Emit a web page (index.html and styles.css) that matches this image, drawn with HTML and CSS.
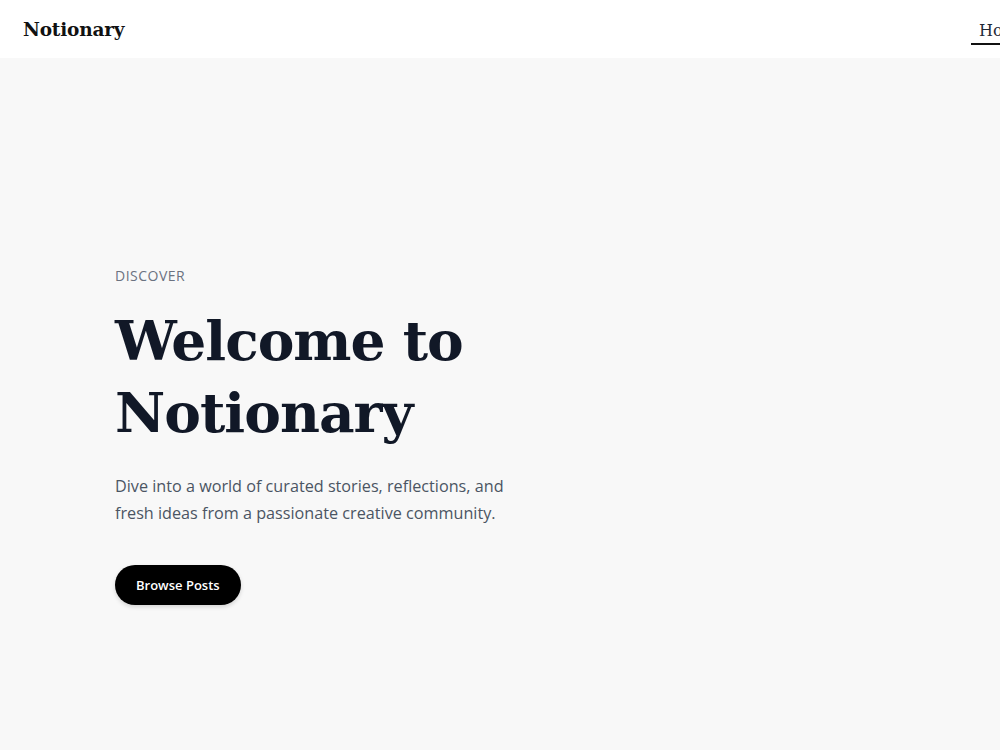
FILE: index.html
```html
<!DOCTYPE html>
<html lang="en">
<head>
  <meta charset="UTF-8" />
  <meta name="viewport" content="width=device-width, initial-scale=1.0"/>
  <title>Notionary</title>
  <link rel="stylesheet" href="styles.css">
</head>
<body>
  <header class="topbar">
    <div class="logo">Notionary</div>
    <nav class="nav">
      <a href="#" class="nav-link active">Home</a>
      <a href="#" class="nav-link">Posts</a>
      <a href="#" class="nav-link">About</a>
    </nav>
  </header>

  <main class="hero">
    <div class="hero-inner">
      <div class="eyebrow">DISCOVER</div>
      <h1 class="hero-title">Welcome to Notionary</h1>
      <p class="hero-text">Dive into a world of curated stories, reflections, and fresh ideas from a passionate creative community.</p>
      <a href="#" class="btn">Browse Posts</a>
    </div>
  </main>
</body>
</html>
```

FILE: styles.css
```css
html, body {
  overflow-x: hidden;
}

body {
  margin: 0;
  padding: 0;
  background-color: #f8f8f8;
  font-family: 'Open Sans', sans-serif;
  min-height: 750px;
}

.topbar {
  background-color: #fff;
  height: 58px;
  display: flex;
  align-items: center;
  padding-left: 23px;
  width: max-content;
}

.logo {
  font-family: 'DejaVu Serif', serif;
  font-weight: bold;
  font-size: 18.5px;
  letter-spacing: -0.2px;
  color: #111;
  width: 104px;
}

.nav {
  display: flex;
  margin-left: 844px;
  height: 100%;
  align-items: center;
}

.nav-link {
  font-family: 'DejaVu Serif', serif;
  font-size: 16px;
  color: #1f2937;
  text-decoration: none;
  padding: 8px 8px 3px;
}

.nav-link.active {
  border-bottom: 2px solid #111;
}

.hero {
  padding: 208px 115px 0;
}

.hero-inner {
  max-width: 460px;
}

.eyebrow {
  font-size: 14px;
  letter-spacing: 0.5px;
  color: #6b7280;
  margin-bottom: 20px;
}

.hero-title {
  font-family: 'DejaVu Serif', serif;
  font-weight: bold;
  font-size: 55px;
  line-height: 72px;
  color: #111827;
  margin: 0 0 24px;
  letter-spacing: -1px;
}

.hero-text {
  font-size: 16.2px;
  line-height: 27px;
  color: #4b5563;
  margin: 0 0 38px;
  max-width: 400px;
}

.btn {
  display: inline-block;
  background-color: #000;
  color: #fff;
  font-size: 13px;
  font-weight: 600;
  text-decoration: none;
  padding: 11px 21px;
  border-radius: 21px;
  box-shadow: 0 2px 4px rgba(0,0,0,0.15);
}
```
